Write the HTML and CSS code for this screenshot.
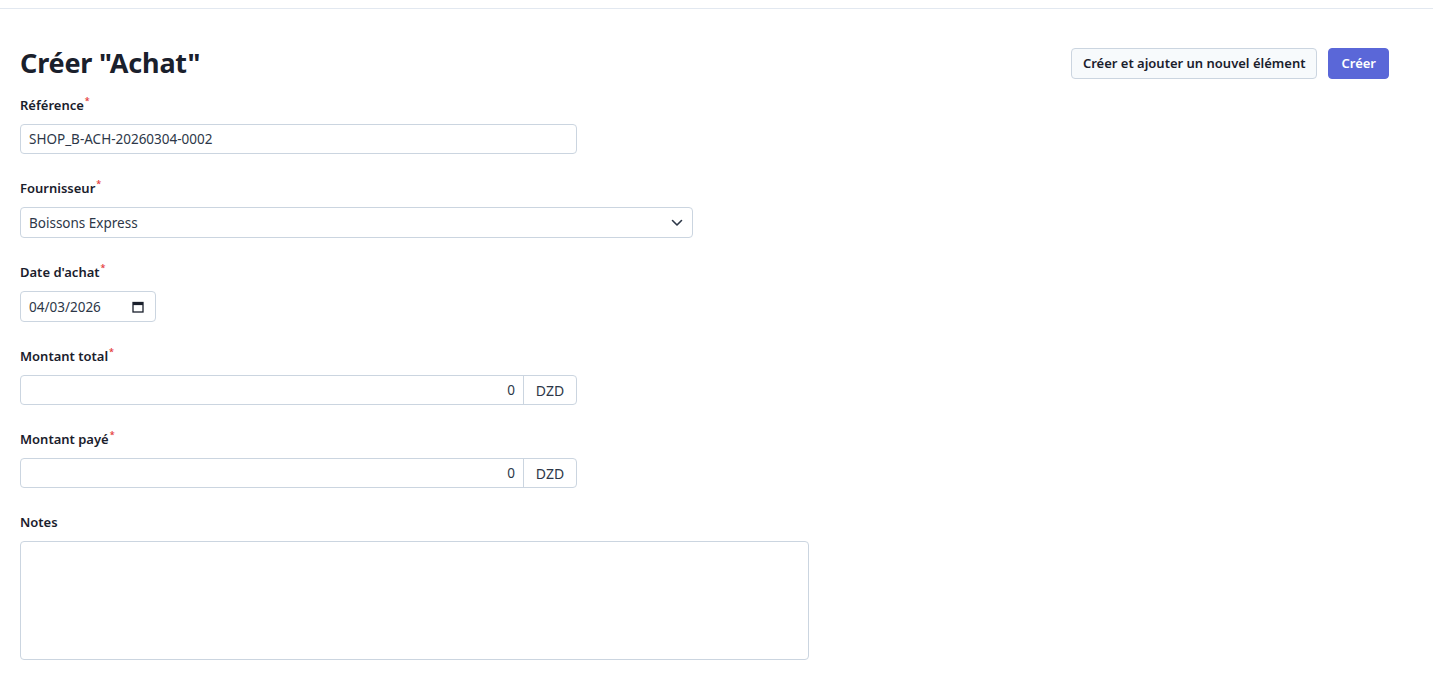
FILE: index.html
```html
<!DOCTYPE html>
<html lang="fr">
<head>
<meta charset="utf-8">
<title>Créer "Achat"</title>
<link rel="stylesheet" href="styles.css">
</head>
<body>
<div class="topbar"></div>
<main class="page">
  <div class="page-header">
    <h1 class="title">Créer "Achat"</h1>
    <div class="actions">
      <button class="btn btn-secondary" type="button">Créer et ajouter un nouvel élément</button>
      <button class="btn btn-primary" type="button">Créer</button>
    </div>
  </div>

  <form class="form">
    <div class="field">
      <label class="label">Référence<span class="req">*</span></label>
      <input class="input w-557" type="text" value="SHOP_B-ACH-20260304-0002">
    </div>

    <div class="field">
      <label class="label">Fournisseur<span class="req">*</span></label>
      <div class="select w-673">
        <span class="select-value">Boissons Express</span>
        <svg class="chevron" width="12" height="8" viewBox="0 0 12 8" aria-hidden="true"><path d="M1.5 1.5 L6 6 L10.5 1.5" fill="none" stroke="#2d3748" stroke-width="1.6" stroke-linecap="round" stroke-linejoin="round"/></svg>
      </div>
    </div>

    <div class="field">
      <label class="label">Date d'achat<span class="req">*</span></label>
      <div class="input date w-136">
        <span>04/03/2026</span>
        <svg class="cal" width="12" height="12" viewBox="0 0 12 12" aria-hidden="true"><rect x="1" y="1.5" width="10" height="9.5" fill="none" stroke="#1a202c" stroke-width="1.3"/><rect x="1" y="1.5" width="10" height="2.6" fill="#1a202c"/></svg>
      </div>
    </div>

    <div class="field">
      <label class="label">Montant total<span class="req">*</span></label>
      <div class="group w-557">
        <div class="group-input">0</div>
        <div class="addon">DZD</div>
      </div>
    </div>

    <div class="field">
      <label class="label">Montant payé<span class="req">*</span></label>
      <div class="group w-557">
        <div class="group-input">0</div>
        <div class="addon">DZD</div>
      </div>
    </div>

    <div class="field">
      <label class="label">Notes</label>
      <textarea class="textarea w-789"></textarea>
    </div>
  </form>
</main>
</body>
</html>
```
FILE: styles.css
```css
* { box-sizing: border-box; }

html, body {
  margin: 0;
  padding: 0;
  background: #ffffff;
  font-family: "Noto Sans", "Open Sans", sans-serif;
  color: #2d3748;
}

.topbar {
  height: 9px;
  border-bottom: 1px solid #e2e8f0;
}

.page {
  padding: 37px 44px 0 20px;
}

.page-header {
  display: flex;
  align-items: center;
  justify-content: space-between;
  height: 34px;
  margin-bottom: 16px;
}

.title {
  margin: 0;
  font-size: 27px;
  line-height: 34px;
  font-weight: 700;
  color: #1a202c;
  letter-spacing: -0.2px;
}

.actions {
  display: flex;
  gap: 11px;
}

.btn {
  height: 31px;
  padding: 0 12px;
  border-radius: 4px;
  font-family: inherit;
  font-size: 13px;
  font-weight: 600;
  cursor: pointer;
}

.btn-secondary {
  background: #f7fafc;
  border: 1px solid #cbd5e0;
  color: #1a202c;
  padding: 0 11px;
}

.btn-primary {
  background: #5a67d8;
  border: 1px solid #5a67d8;
  color: #ffffff;
  padding: 0 12px;
}

.form {
  display: flex;
  flex-direction: column;
}

.field {
  display: flex;
  flex-direction: column;
  align-items: flex-start;
  margin-bottom: 25px;
}

.label {
  display: block;
  height: 18px;
  font-size: 13px;
  line-height: 18px;
  font-weight: 600;
  color: #1a202c;
  margin-bottom: 10px;
}

.req {
  color: #e53e3e;
  font-size: 9px;
  line-height: 0;
  vertical-align: 6px;
  margin-left: 1px;
}

.input, .select, .group, .textarea {
  border: 1px solid #cbd5e0;
  border-radius: 4px;
  background: #fff;
  font-family: inherit;
  font-size: 13.5px;
  color: #2d3748;
}

.input {
  height: 30px;
  padding: 0 8px;
  outline: none;
}

.select {
  height: 31px;
  display: flex;
  align-items: center;
  justify-content: space-between;
  padding: 0 8px 0 8px;
}

.chevron { margin-right: 1px; }

.date {
  height: 31px;
  display: flex;
  align-items: center;
  justify-content: space-between;
  padding: 0 11px 0 8px;
}

.group {
  height: 30px;
  display: flex;
}

.group-input {
  flex: 1;
  display: flex;
  align-items: center;
  justify-content: flex-end;
  padding: 0 8px;
}

.addon {
  width: 53px;
  border-left: 1px solid #cbd5e0;
  display: flex;
  align-items: center;
  justify-content: center;
  font-size: 14px;
  color: #2d3748;
}

.textarea {
  display: block;
  height: 119px;
  resize: none;
  outline: none;
}

.w-557 { width: 557px; }
.w-673 { width: 673px; }
.w-136 { width: 136px; }
.w-789 { width: 789px; }
```
